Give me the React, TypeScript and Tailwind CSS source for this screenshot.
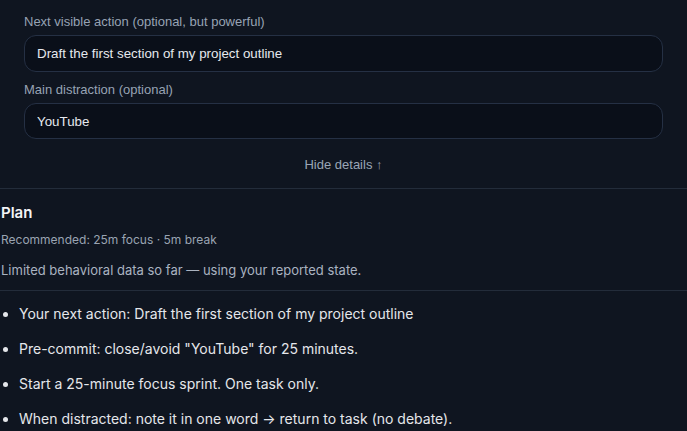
export default function App() {
  const steps = [
    "Your next action: Draft the first section of my project outline",
    'Pre-commit: close/avoid "YouTube" for 25 minutes.',
    "Start a 25-minute focus sprint. One task only.",
    "When distracted: note it in one word → return to task (no debate).",
  ];

  return (
    <div className="h-[431px] w-[687px] overflow-hidden bg-[#0f1520]">
      {/* details form */}
      <div className="px-6 pt-[14px] font-['Liberation_Sans',Arial,sans-serif]">
        <label className="block text-[13px] leading-4 text-[#97a3b4]">
          Next visible action (optional, but powerful)
        </label>
        <input
          readOnly
          value="Draft the first section of my project outline"
          className="mt-[5px] h-[37px] w-full rounded-xl border border-[#253044] bg-[#0a0f19] px-[12px] text-[13.333px] text-[#e6e9ee] outline-none"
        />
        <label className="mt-[10px] block text-[13px] leading-4 text-[#97a3b4]">
          Main distraction (optional)
        </label>
        <input
          readOnly
          value="YouTube"
          className="mt-[5px] h-9 w-full rounded-xl border border-[#253044] bg-[#0a0f19] px-[12px] text-[13.333px] text-[#e6e9ee] outline-none"
        />
        <div className="flex justify-center pt-[18px] pb-[15px]">
          <button
            type="button"
            className="text-[13px] leading-4 text-[#9aa6b6]"
          >
            Hide details ↑
          </button>
        </div>
      </div>

      {/* plan */}
      <div className="border-t border-[#232c3a] font-['Inter',sans-serif]">
        <div className="pl-px pt-[14px] pb-[12px]">
          <h2 className="text-[15px] leading-5 font-semibold text-[#f3f4f6]">
            Plan
          </h2>
          <p className="mt-[9px] text-[12px] leading-4 text-[#9aa4b2]">
            Recommended: 25m focus · 5m break
          </p>
          <p className="mt-[14px] text-[13px] leading-4 text-[#aab3c0]">
            Limited behavioral data so far — using your reported state.
          </p>
        </div>
        <ul className="list-disc border-t border-[#232c3a] pt-[13px] pl-[19px] text-[14px] leading-5 text-[#e5e7eb]">
          {steps.map((s) => (
            <li key={s} className="mb-[15px]">
              {s}
            </li>
          ))}
        </ul>
      </div>
    </div>
  );
}
